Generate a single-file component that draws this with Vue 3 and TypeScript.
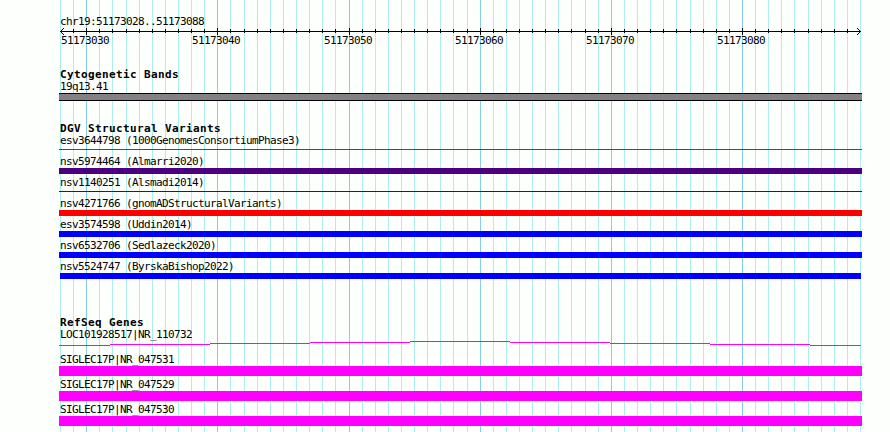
<script setup lang="ts">
interface Feature {
  label: string
  kind: string
}

const region = 'chr19:51173028..51173088'
const start = 51173028
const bases = 61

// one grid line per base, a darker one every ten
const ticks = Array.from({ length: bases + 1 }, (_, i) => ({
  x: Math.round(60 + (i * 800) / bases),
  pos: start + i,
  major: (start + i) % 10 === 0,
}))
const majorTicks = ticks.filter((t) => t.major)

const variants: Feature[] = [
  { label: 'esv3644798 (1000GenomesConsortiumPhase3)', kind: 'thin loss' },
  { label: 'nsv5974464 (Almarri2020)', kind: 'complex' },
  { label: 'nsv1140251 (Alsmadi2014)', kind: 'thin complex' },
  { label: 'nsv4271766 (gnomADStructuralVariants)', kind: 'loss' },
  { label: 'esv3574598 (Uddin2014)', kind: 'gain' },
  { label: 'nsv6532706 (Sedlazeck2020)', kind: 'gain' },
  { label: 'nsv5524747 (ByrskaBishop2022)', kind: 'gain inset' },
]

const genes: string[] = ['SIGLEC17P|NR_047531', 'SIGLEC17P|NR_047529', 'SIGLEC17P|NR_047530']

// the intron is a shallow hat, drawn in whole pixel steps
const intron = [
  { x: 0, y: 4, w: 51 },
  { x: 51, y: 3, w: 100 },
  { x: 151, y: 2, w: 100 },
  { x: 251, y: 1, w: 100 },
  { x: 351, y: 0, w: 100 },
  { x: 451, y: 1, w: 100 },
  { x: 551, y: 2, w: 100 },
  { x: 651, y: 3, w: 100 },
  { x: 751, y: 4, w: 51 },
]
</script>

<template>
  <main class="browser">
    <svg class="grid" width="890" height="432" shape-rendering="crispEdges">
      <rect
        v-for="t in ticks"
        :key="t.pos"
        :class="t.major ? 'line-major' : 'line-minor'"
        :x="t.x"
        y="0"
        width="1"
        height="432"
      />
    </svg>

    <div class="tracks">
      <header class="ruler">
        <div class="label">{{ region }}</div>
        <svg class="scale" width="890" height="22">
          <g shape-rendering="crispEdges">
            <rect x="60" y="4" width="801" height="1" />
            <rect
              v-for="t in ticks.slice(1, -1)"
              :key="t.pos"
              :x="t.x"
              :y="t.major ? 1 : 2"
              width="1"
              :height="t.major ? 7 : 4"
            />
            <path d="M61 3h1v1h-1zM62 2h1v1h-1zM63 1h1v1h-1zM61 5h1v1h-1zM62 6h1v1h-1zM63 7h1v1h-1z" />
            <path d="M859 3h1v1h-1zM858 2h1v1h-1zM857 1h1v1h-1zM859 5h1v1h-1zM858 6h1v1h-1zM857 7h1v1h-1z" />
          </g>
          <text v-for="t in majorTicks" :key="t.pos" :x="t.x - 25" y="17">{{ t.pos }}</text>
        </svg>
      </header>

      <section class="cytobands">
        <h2>Cytogenetic Bands</h2>
        <div class="label">19q13.41</div>
        <div class="band"></div>
      </section>

      <section class="variants">
        <h2>DGV Structural Variants</h2>
        <div v-for="v in variants" :key="v.label" class="variant">
          <div class="label">{{ v.label }}</div>
          <div class="bar" :class="v.kind"></div>
        </div>
      </section>

      <section class="genes">
        <h2>RefSeq Genes</h2>
        <div class="label">LOC101928517|NR_110732</div>
        <svg class="intron" width="803" height="5" shape-rendering="crispEdges">
          <rect v-for="s in intron" :key="s.x" :x="s.x" :y="s.y" :width="s.w" height="1" />
        </svg>
        <div v-for="g in genes" :key="g" class="gene">
          <div class="label">{{ g }}</div>
          <div class="exon"></div>
        </div>
      </section>
    </div>
  </main>
</template>

<style>
body {
  margin: 0;
  background: #fdfffc;
}
</style>

<style scoped>
.browser {
  position: relative;
  width: 890px;
  height: 432px;
  overflow: hidden;
  color: #000;
  font-family: "DejaVu Sans Mono", monospace;
  font-size: 11px;
  letter-spacing: -0.622px;
}

.grid {
  position: absolute;
  top: 0;
  left: 0;
}

.line-minor {
  fill: #afeeee;
}

.line-major {
  fill: #87ceeb;
}

.tracks {
  position: relative;
  padding-top: 16px;
}

.label {
  height: 12px;
  padding-left: 60px;
  line-height: 12px;
  white-space: pre;
}

h2 {
  height: 12px;
  margin: 0;
  padding-left: 60px;
  font-size: 11px;
  font-weight: bold;
  line-height: 12px;
  letter-spacing: 0.378px;
}

.ruler .label {
  height: 11px;
}

.scale {
  display: block;
}

.cytobands {
  padding-top: 20px;
}

.band {
  box-sizing: border-box;
  width: 803px;
  height: 8px;
  margin-left: 59px;
  border: solid #000;
  border-width: 1px 0;
  background: #848084;
}

.variants {
  padding-top: 22px;
}

.variant {
  height: 21px;
}

.bar {
  width: 803px;
  height: 6px;
  margin-left: 59px;
}

.bar.thin {
  height: 1px;
  transform: translateY(2px);
}

.bar.inset {
  width: 801px;
  margin-left: 60px;
}

.loss {
  background: #f00;
}

.complex {
  background: #4b0082;
}

.gain {
  background: #00f;
}

.genes {
  padding-top: 35px;
}

.intron {
  display: block;
  margin: 0 0 8px 59px;
  fill: #f0f;
}

.gene {
  height: 25px;
}

.exon {
  width: 803px;
  height: 10px;
  margin-left: 59px;
  background: #f0f;
}
</style>
